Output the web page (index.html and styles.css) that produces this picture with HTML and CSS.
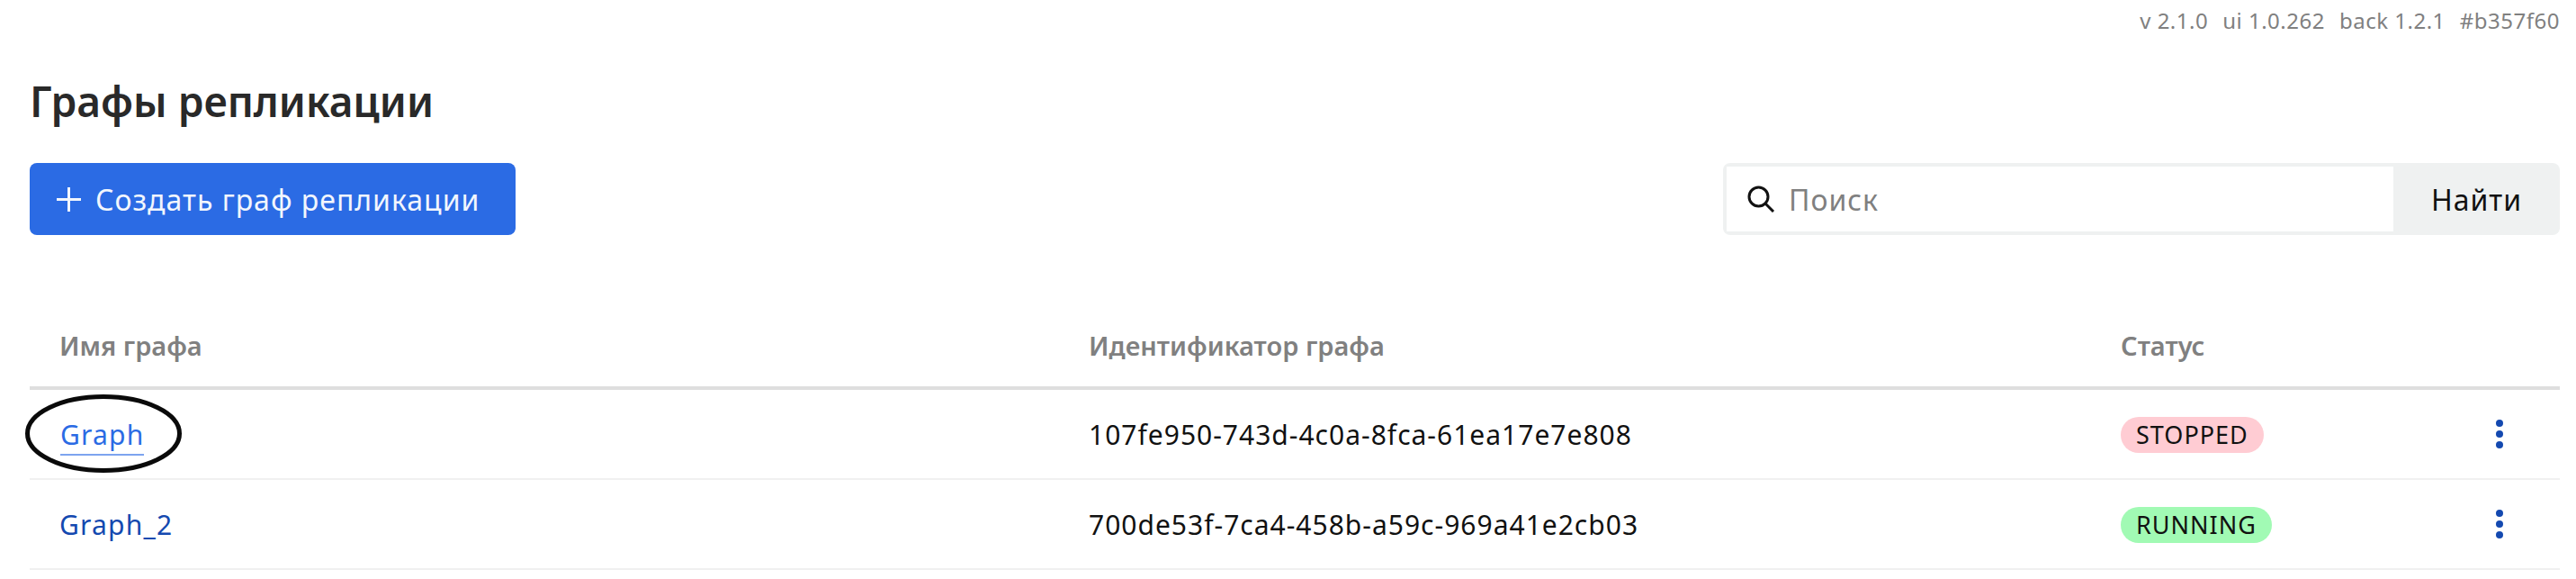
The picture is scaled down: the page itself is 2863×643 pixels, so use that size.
FILE: index.html
```html
<!DOCTYPE html>
<html lang="ru">
<head>
    <meta charset="UTF-8">
    <title>Графы репликации</title>
    <link rel="stylesheet" href="styles.css">
</head>
<body>
    <div class="versions">
        <span>v 2.1.0</span>
        <span>ui 1.0.262</span>
        <span>back 1.2.1</span>
        <span>#b357f60</span>
    </div>

    <h1>Графы репликации</h1>

    <div class="toolbar">
        <button class="create-btn">
            <svg class="plus-icon" viewBox="0 0 27 27"><path d="M13.5 0V27M0 13.5H27"/></svg>
            Создать граф репликации
        </button>

        <div class="search">
            <div class="search-field">
                <svg class="search-icon" viewBox="0 0 31 30"><circle cx="12.5" cy="12.5" r="10.5"/><path d="M20 20L29 29"/></svg>
                <span class="placeholder">Поиск</span>
            </div>
            <button class="search-btn">Найти</button>
        </div>
    </div>

    <table class="graphs">
        <thead>
            <tr>
                <th class="col-name">Имя графа</th>
                <th class="col-id">Идентификатор графа</th>
                <th class="col-status">Статус</th>
                <th></th>
            </tr>
        </thead>
        <tbody>
            <tr>
                <td class="name-cell">
                    <a class="graph-link hovered" href="#">Graph</a>
                    <svg class="circled" viewBox="0 0 176 87"><ellipse cx="87" cy="43.5" rx="84.5" ry="41"/></svg>
                </td>
                <td>107fe950-743d-4c0a-8fca-61ea17e7e808</td>
                <td><span class="status stopped">STOPPED</span></td>
                <td class="actions"><span class="dots"><i></i><i></i><i></i></span></td>
            </tr>
            <tr>
                <td class="name-cell"><a class="graph-link" href="#">Graph_2</a></td>
                <td>700de53f-7ca4-458b-a59c-969a41e2cb03</td>
                <td><span class="status running">RUNNING</span></td>
                <td class="actions"><span class="dots"><i></i><i></i><i></i></span></td>
            </tr>
        </tbody>
    </table>
</body>
</html>
```

FILE: styles.css
```css
body {
    margin: 0;
    padding: 0 18px 0 33px;
    font-family: "Noto Sans", sans-serif;
    background: #fff;
    color: #111;
}

.versions {
    display: flex;
    justify-content: flex-end;
    gap: 16px;
    padding-top: 7px;
    font-size: 24px;
    line-height: 31px;
    letter-spacing: 0.5px;
    color: #808080;
}

h1 {
    margin: 42px 0 0;
    font-size: 46px;
    font-weight: 600;
    line-height: 64px;
    color: #292929;
}

.toolbar {
    display: flex;
    justify-content: space-between;
    margin-top: 37px;
}

.create-btn {
    display: flex;
    align-items: center;
    gap: 16px;
    width: 540px;
    height: 80px;
    padding: 0 0 0 30px;
    border: none;
    border-radius: 8px;
    background: #2b6be4;
    color: #f2f6fd;
    font-family: inherit;
    font-size: 32px;
    letter-spacing: 1px;
}

.plus-icon {
    width: 27px;
    height: 27px;
    fill: none;
    stroke: #f2f6fd;
    stroke-width: 3;
}

.search {
    display: flex;
    width: 930px;
    height: 80px;
    border-radius: 8px;
    background: #eff1f1;
}

.search-field {
    display: flex;
    align-items: center;
    gap: 15px;
    width: 741px;
    margin: 4px 0 4px 4px;
    padding-left: 23px;
    box-sizing: border-box;
    background: #fff;
}

.search-icon {
    width: 31px;
    height: 30px;
    fill: none;
    stroke: #111;
    stroke-width: 3;
}

.placeholder {
    font-size: 32px;
    letter-spacing: 1px;
    color: #808080;
}

.search-btn {
    flex: 1;
    border: none;
    background: none;
    color: #111;
    font-family: inherit;
    font-size: 32px;
    letter-spacing: 1px;
}

.graphs {
    width: 100%;
    margin-top: 84px;
    border-collapse: collapse;
    table-layout: fixed;
}

.graphs th {
    height: 86px;
    padding: 0 0 8px 33px;
    box-sizing: border-box;
    border-bottom: 4px solid #dedede;
    text-align: left;
    font-size: 29px;
    font-weight: 600;
    color: #808080;
}

.col-name {
    width: 1144px;
}

.col-id {
    width: 1147px;
}

.col-status {
    width: 400px;
}

.graphs td {
    height: 98px;
    padding: 0 0 0 33px;
    border-bottom: 2px solid #f0f0f0;
    font-size: 30px;
    letter-spacing: 1px;
}

.name-cell {
    position: relative;
}

.graph-link {
    color: #1449b0;
    font-size: 30px;
    letter-spacing: 1.2px;
    text-decoration: none;
}

.graph-link.hovered {
    margin-left: 1px;
    padding-bottom: 1px;
    border-bottom: 2px solid #7da4ef;
    color: #2b6be4;
}

/* hand drawn mark around the first graph */
.circled {
    position: absolute;
    left: -5px;
    top: 5px;
    width: 176px;
    height: 87px;
    fill: none;
    stroke: #0a0a0a;
    stroke-width: 5;
}

.status {
    display: inline-block;
    padding: 0 17px;
    border-radius: 20px;
    font-size: 27px;
    line-height: 40px;
    letter-spacing: 1px;
    color: #111;
}

.stopped {
    background: #ffccd3;
}

.running {
    background: #a1fab4;
}

.graphs td.actions {
    padding: 0 0 0 50px;
}

.dots {
    display: flex;
    flex-direction: column;
    gap: 4px;
    width: 8px;
}

.dots i {
    width: 8px;
    height: 8px;
    border-radius: 50%;
    background: #1449b0;
}
```
